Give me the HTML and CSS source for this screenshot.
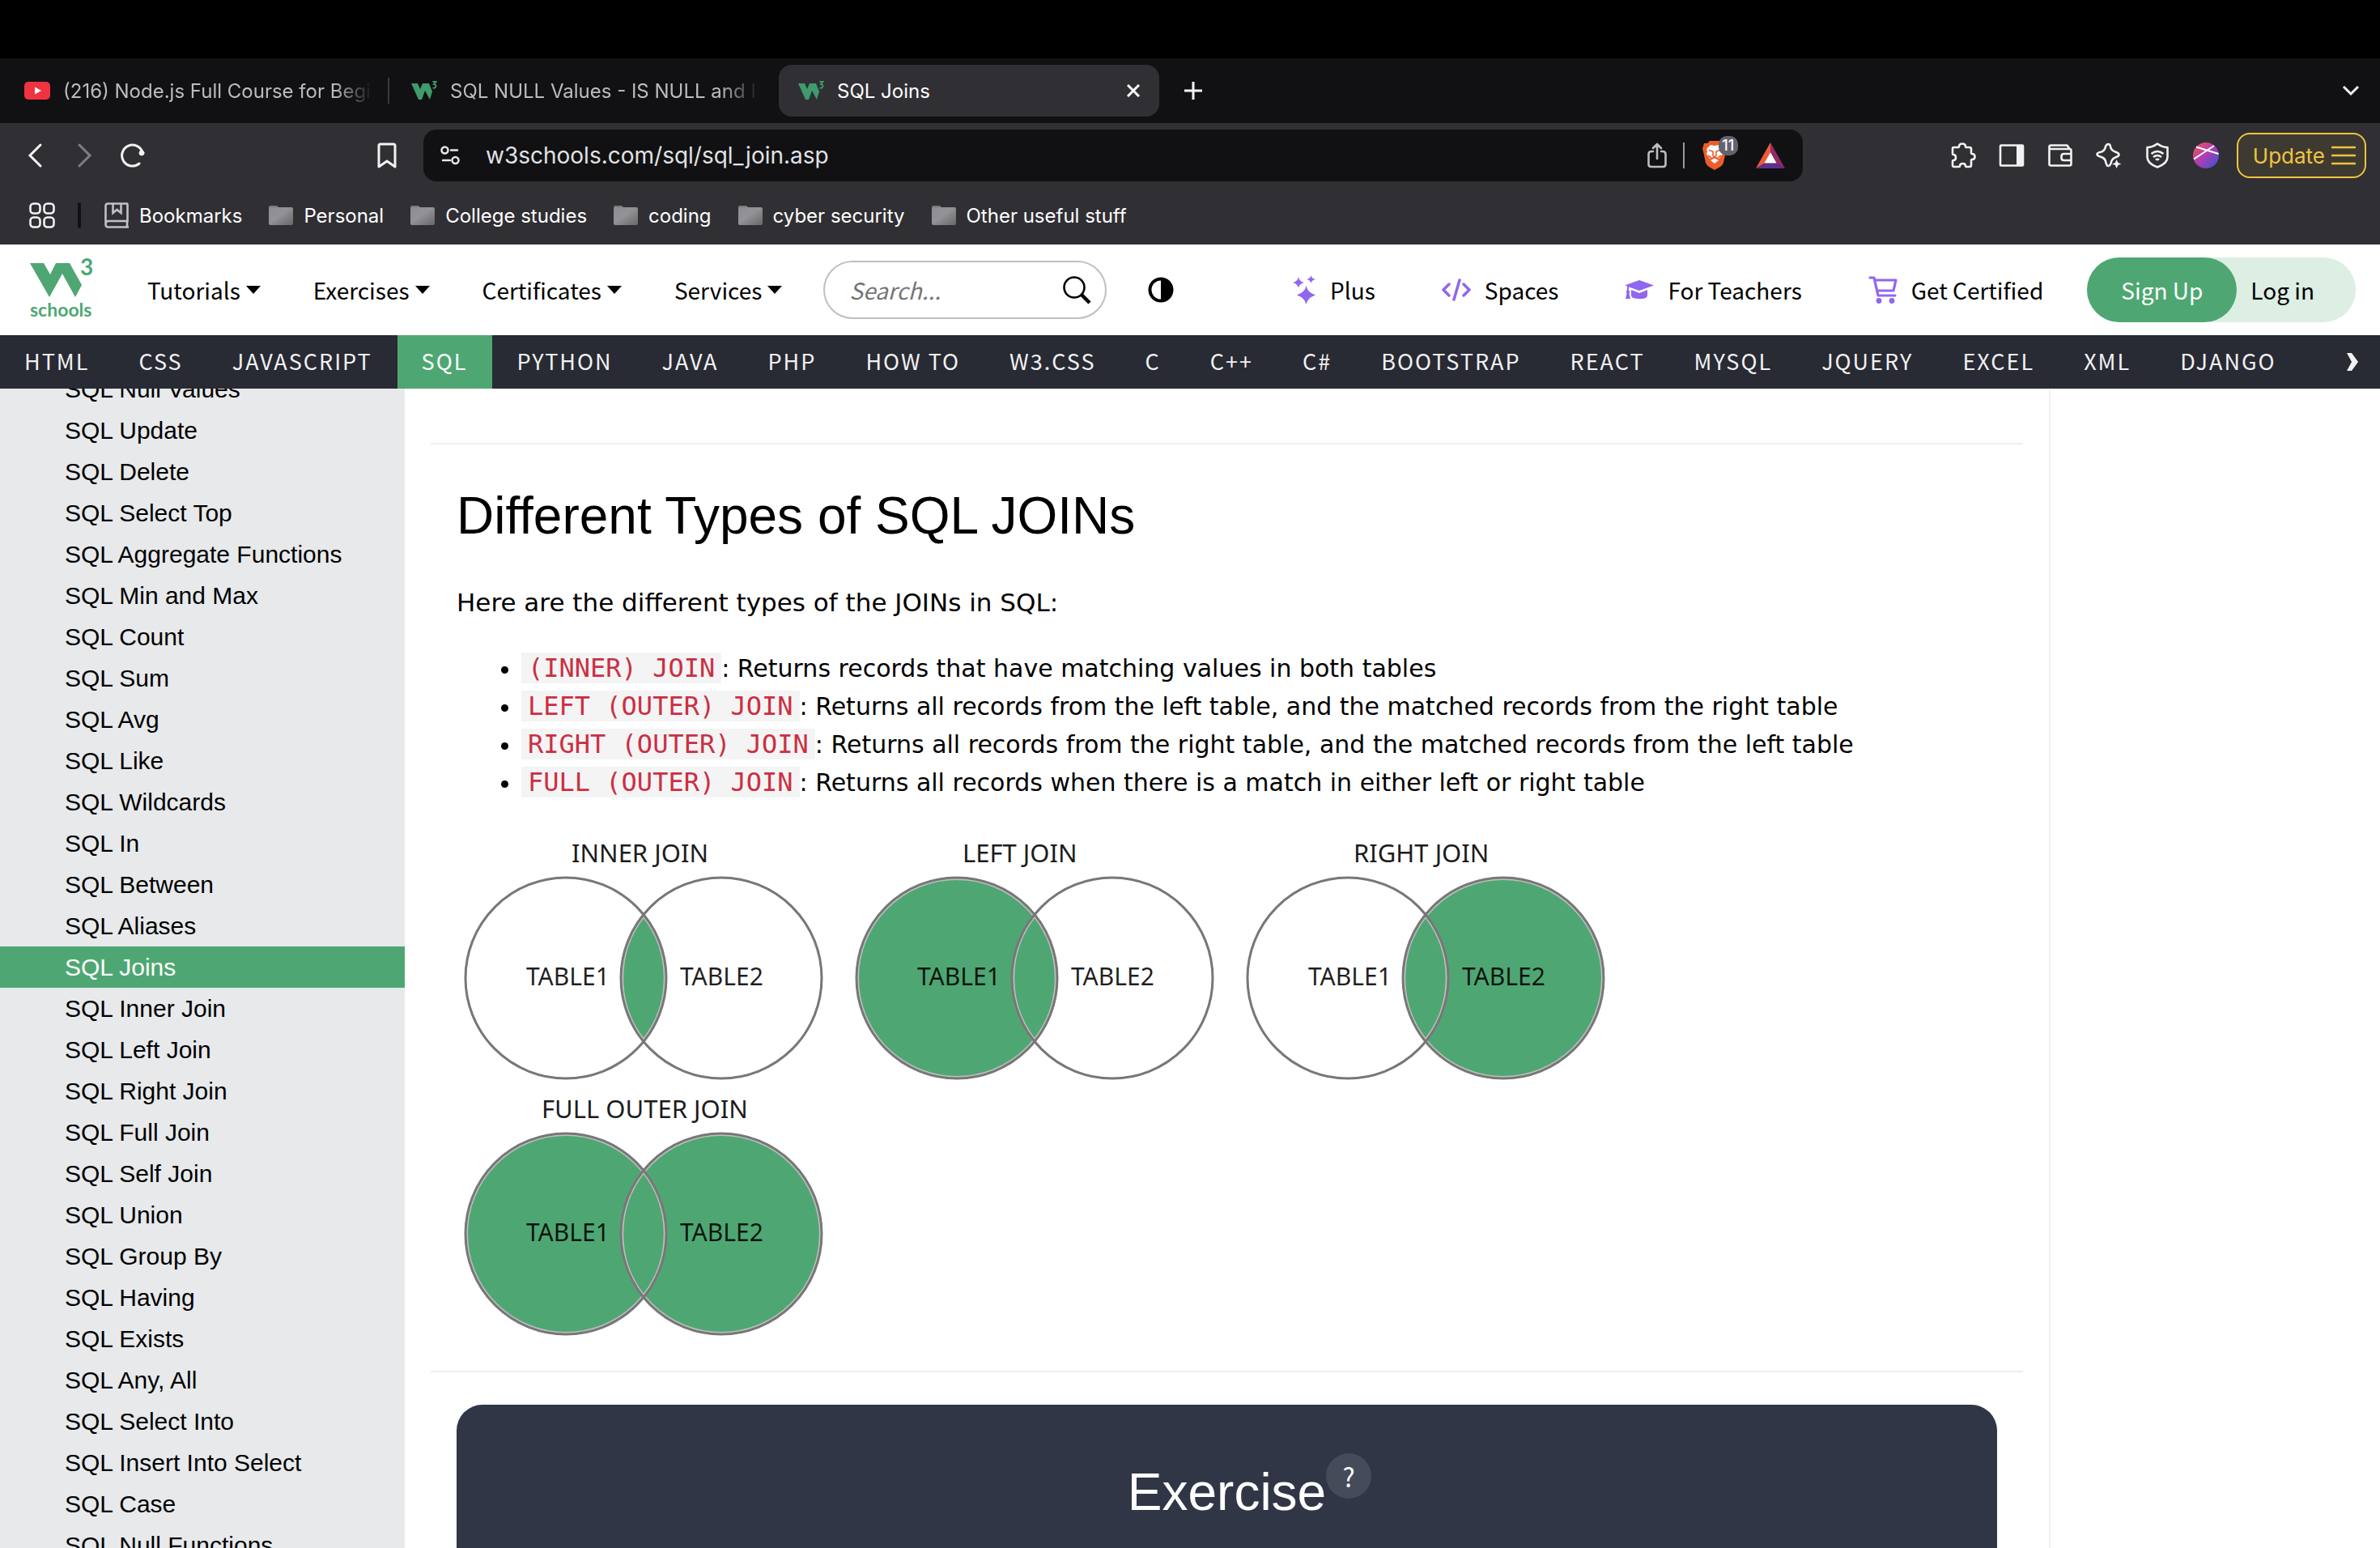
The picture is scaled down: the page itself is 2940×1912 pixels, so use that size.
FILE: index.html
```html
<!DOCTYPE html>
<html lang="en">
<head>
<meta charset="utf-8">
<title>SQL Joins</title>
<link rel="stylesheet" href="styles.css">
</head>
<body>
<svg class="defs" aria-hidden="true">
  <defs>
    <linearGradient id="folder-fill" x1="0" y1="0" x2="1" y2="1"><stop offset="0" stop-color="#8d8d92"/><stop offset=".45" stop-color="#929297"/><stop offset="1" stop-color="#68686a"/></linearGradient>
    <linearGradient id="avatar-fill" x1="0" y1="0" x2="1" y2="1"><stop offset=".1" stop-color="#e4565f"/><stop offset=".45" stop-color="#b63cae"/><stop offset=".9" stop-color="#4a50d0"/></linearGradient>
    <symbol id="folder" viewBox="0 0 30 26"><path d="M0 3a2 2 0 0 1 2-2h8l3 3h-13z" fill="#7b7a78"/><rect y="3" width="30" height="22" rx="2" fill="url(#folder-fill)"/></symbol>
    <symbol id="w3" viewBox="0 0 32 24"><path d="M0 3h8l3 7 3-7h8l4 10-3 10-6-11-4 11h-4z" fill="#3f9a6c"/><path d="M26.500 1h4l-2.500 3c4 0 3 6-1.500 4.500" fill="none" stroke="#3f9a6c" stroke-width="1.800"/></symbol>
    <symbol id="caret" viewBox="0 0 18 10"><path d="M0 0h18l-9 10z"/></symbol>
  </defs>
</svg>

<header class="browser">
  <div class="menubar"></div>
  <div class="tabs">
    <button class="tab" type="button">
      <svg width="32" height="32" viewBox="0 0 32 32"><rect y="5" width="32" height="22" rx="5" fill="#ef3340"/><path d="M13 11.500l8 4.500-8 4.500z" fill="#fff"/></svg>
      <span class="tab-title">(216) Node.js Full Course for Beginners</span>
    </button>
    <span class="tab-divider"></span>
    <button class="tab" type="button">
      <svg width="32" height="24"><use href="#w3"/></svg>
      <span class="tab-title">SQL NULL Values - IS NULL and IS NOT</span>
    </button>
    <span class="tab-space"></span>
    <button class="tab tab-active" type="button">
      <svg width="32" height="24"><use href="#w3"/></svg>
      <span class="tab-title">SQL Joins</span>
      <svg width="16" height="16" viewBox="0 0 16 16" fill="none" stroke="#fff" stroke-width="3"><path d="M1 1l14 14M15 1l-14 14"/></svg>
    </button>
    <button class="icon-button new-tab" type="button" aria-label="New tab"><svg width="22" height="22" viewBox="0 0 22 22" fill="none" stroke="#f5f5f5" stroke-width="3"><path d="M11 0v22M0 11h22"/></svg></button>
    <button class="icon-button tab-list" type="button" aria-label="Search tabs"><svg width="22" height="14" viewBox="0 0 22 14" fill="none" stroke="#f5f5f5" stroke-width="3"><path d="M2 2l9 9 9-9"/></svg></button>
  </div>

  <div class="toolbar">
    <div class="history">
      <button class="icon-button" type="button" aria-label="Back"><svg width="32" height="32" viewBox="0 0 32 32" fill="none" stroke="#f2f2f4" stroke-width="3" stroke-linecap="round"><path d="M22 3L9 16l13 13"/></svg></button>
      <button class="icon-button" type="button" aria-label="Forward"><svg width="32" height="32" viewBox="0 0 32 32" fill="none" stroke="#7d7d82" stroke-width="3" stroke-linecap="round"><path d="M10 3l13 13-13 13"/></svg></button>
      <button class="icon-button" type="button" aria-label="Reload"><svg width="32" height="32" viewBox="0 0 32 32" fill="none" stroke="#f2f2f4" stroke-width="3" stroke-linecap="round"><path d="M24 26A13 13 0 1 1 28 12"/><circle cx="27" cy="13" r="3" fill="#f2f2f4" stroke-width="1"/></svg></button>
      <button class="icon-button add-bookmark" type="button" aria-label="Add bookmark"><svg width="24" height="32" viewBox="0 0 24 32" fill="none" stroke="#f2f2f4" stroke-width="3" stroke-linejoin="round"><path d="M2 4q0-2 2-2h16q2 0 2 2v26l-10-7-10 7z"/></svg></button>
    </div>
    <div class="address">
      <svg width="24" height="24" viewBox="0 0 24 24" fill="none" stroke="#e6e6e8" stroke-width="2.500" stroke-linecap="round"><circle cx="5.500" cy="5.500" r="4"/><path d="M13 5.500h8M3 18h9"/><circle cx="18.500" cy="18" r="4"/></svg>
      <input class="address-text" type="text" aria-label="Address" value="w3schools.com/sql/sql_join.asp">
      <svg width="24" height="32" viewBox="0 0 24 32" fill="none" stroke="#bdbdc0" stroke-width="2.600" stroke-linecap="round" stroke-linejoin="round"><path d="M12 20V2M7 7l5-5 5 5M7 11H5q-3.500 0-3.500 3.500V27q0 3 3.500 3h14q3.500 0 3.500-3V14.500Q22.500 11 19 11h-2"/></svg>
      <span class="address-divider"></span>
      <span class="shield">
        <svg width="30" height="36" viewBox="0 0 30 36"><path d="M9 0h12l3 3h3l3 7-1 3-3 14q-1 3-4 5l-7 4-7-4q-3-2-4-5L1 13 0 10l2-7h4z" fill="#ec5d2a"/><path d="M10 5l5 1 5-1 5 5-1 3 1 3-4 6-6-3-6 3-4-6 1-3-1-3zM10 24l5-2.500 5 2.500-5 4z" fill="#fff"/><path d="M8 11.500l5 1.500v5l2 2 2-2v-5l5-1.500M7 18l4 3M23 18l-4 3" fill="none" stroke="#ec5d2a" stroke-width="1.600"/></svg>
        <span class="badge">11</span>
      </span>
      <svg width="36" height="32" viewBox="0 0 36 32"><path d="M18 0L0 32l11-6.500L18 12z" fill="#f15a38"/><path d="M18 0l18 32-11-6.500L18 12z" fill="#932c64"/><path d="M0 32h36l-11-6.500H11z" fill="#5f2f8e"/><path d="M18 12l7.500 13.500h-15z" fill="#fff"/></svg>
    </div>
    <div class="extensions">
      <button class="icon-button" type="button" aria-label="Extensions"><svg width="32" height="32" viewBox="0 0 32 32" fill="none" stroke="#f2f2f4" stroke-width="2.600" stroke-linejoin="round"><path d="M4 6h6q1 0 1-1 0-3.500 4-3.500T19 5q0 1 1 1h4q2 0 2 2v5q0 1 1 1 3.500 0 3.500 3.500T27 21q-1 0-1 1v6q0 2-2 2h-4q-1 0-1-1 0-3-3.500-3T12 29q0 1-1 1H5q-2 0-2-2v-5q0-1 1-1 3 0 3-3.500T4 15q-1 0-1-1V8q0-2 1-2z"/></svg></button>
      <button class="icon-button" type="button" aria-label="Sidebar"><svg width="32" height="32" viewBox="0 0 32 32"><rect x="2" y="3.500" width="28" height="25" rx="1" fill="none" stroke="#f2f2f4" stroke-width="2.600"/><path d="M22 3h8v26h-8z" fill="#f2f2f4"/></svg></button>
      <button class="icon-button" type="button" aria-label="Wallet"><svg width="32" height="32" viewBox="0 0 32 32" fill="none" stroke="#f2f2f4" stroke-width="2.600" stroke-linejoin="round"><path d="M2.500 8V5.500q0-2 2-2h20l3 4.500H2.500v18.500q0 2 2 2h23q2 0 2-2V10q0-2-2-2M29.500 14h-9q-3 0-3 3v2q0 3 3 3h9"/></svg></button>
      <button class="icon-button" type="button" aria-label="Assistant"><svg width="32" height="32" viewBox="0 0 32 32" fill="none" stroke="#f2f2f4" stroke-width="2.600" stroke-linejoin="round"><path d="M15.500 2q2 0 2.500 3 1 5 6 6.500 4.500 1.500 4.500 3.500T24 18.500q-3 1-4.500 4Q18 29 15.500 29T12 23q-1-3.500-5-5-5.500-1.500-5.500-3.500T7 11.500q4-1.500 5-6.500 1-3 3.500-3z"/><path d="M25.500 21l2 4 4 1.500-4 1.500-2 4-1.500-4-4-1.500 4-1.500z" fill="#f2f2f4" stroke="none"/></svg></button>
      <button class="icon-button" type="button" aria-label="VPN"><svg width="32" height="32" viewBox="0 0 32 32" fill="none" stroke="#f2f2f4" stroke-width="2.600" stroke-linejoin="round"><path d="M16 1.500q6 4.500 12.500 4.500v12q0 8-12.500 12.500Q3.500 26 3.500 18V6Q10 6 16 1.500z"/><path d="M8.500 14q7.500-6 15 0M11 18q5-4 10 0M14 21.500q2-1.500 4 0"/></svg></button>
      <button class="icon-button" type="button" aria-label="Profile"><svg width="32" height="32" viewBox="0 0 32 32"><circle cx="16" cy="16" r="16" fill="url(#avatar-fill)"/><path d="M4 5.500L31.500 14M1 20.500L26 4" stroke="#fff" stroke-width="2"/></svg></button>
      <button class="update" type="button">Update<svg width="30" height="24" viewBox="0 0 30 24" stroke="#efc440" stroke-width="2.600" stroke-linecap="round"><path d="M1 2h28M1 12h28M1 22h28"/></svg></button>
    </div>
  </div>

  <nav class="bookmarks" aria-label="Bookmarks">
    <button class="icon-button" type="button" aria-label="Apps"><svg width="32" height="32" viewBox="0 0 32 32" fill="none" stroke="#f2f2f4" stroke-width="2.600"><rect x="1.500" y="1.500" width="12" height="12" rx="4"/><rect x="18.500" y="1.500" width="12" height="12" rx="4"/><rect x="1.500" y="18.500" width="12" height="12" rx="4"/><rect x="18.500" y="18.500" width="12" height="12" rx="4"/></svg></button>
    <span class="bookmarks-divider"></span>
    <a href="#"><svg width="30" height="32" viewBox="0 0 30 32" fill="none" stroke="#bfc0c6" stroke-width="2.600"><path d="M29 1.500H4.500q-3 0-3 3V27q0 3.500 3 3.500H30M28.500 1.500v21.500H5q-3.500 0-3.500 4M28 23v7M10.500 2v11l5-4 5 4V2"/></svg>Bookmarks</a>
    <a href="#"><svg width="30" height="26"><use href="#folder"/></svg>Personal</a>
    <a href="#"><svg width="30" height="26"><use href="#folder"/></svg>College studies</a>
    <a href="#"><svg width="30" height="26"><use href="#folder"/></svg>coding</a>
    <a href="#"><svg width="30" height="26"><use href="#folder"/></svg>cyber security</a>
    <a href="#"><svg width="30" height="26"><use href="#folder"/></svg>Other useful stuff</a>
  </nav>
</header>

<header class="site">
  <a class="logo" href="#" aria-label="W3Schools">
    <span class="logo-mark"><svg width="66" height="44" viewBox="0 0 66 44"><path d="M0 1h17l8 14 7-14h17l15 27-8 15-16-29-16 29z" fill="#4ea773"/></svg><span class="logo-three">3</span></span>
    <span class="logo-word">schools</span>
  </a>
  <nav class="site-menu" aria-label="Site">
    <a href="#">Tutorials<svg width="18" height="10"><use href="#caret"/></svg></a>
    <a href="#">Exercises<svg width="18" height="10"><use href="#caret"/></svg></a>
    <a href="#">Certificates<svg width="18" height="10"><use href="#caret"/></svg></a>
    <a href="#">Services<svg width="18" height="10"><use href="#caret"/></svg></a>
  </nav>
  <form class="search">
    <input type="text" placeholder="Search..." aria-label="Search">
    <button class="icon-button" type="button" aria-label="Submit search"><svg width="36" height="36" viewBox="0 0 36 36" fill="none" stroke="#000"><circle cx="15" cy="15" r="12.500" stroke-width="2.600"/><path d="M24 24l10 10" stroke-width="4.500"/></svg></button>
  </form>
  <button class="icon-button contrast" type="button" aria-label="Toggle dark mode"><svg width="32" height="32" viewBox="0 0 32 32"><circle cx="16" cy="16" r="13.500" fill="none" stroke="#000" stroke-width="4"/><path d="M16 3a13 13 0 0 1 0 26z"/></svg></button>
  <nav class="site-links" aria-label="Products">
    <a href="#"><svg width="30" height="36" viewBox="0 0 30 36" fill="#9166f0"><path d="M17.500 13q1.500 8 11.500 11.500-10 3.500-11.500 11.500Q16 28 6 24.500 16 21 17.500 13zM8 2q1 5.500 7 7-6 1.500-7 7-1-5.500-7-7 6-1.500 7-7zM23.500 0q.5 4 5.500 5-5 1-5.500 5-.5-4-5.500-5 5-1 5.500-5z"/></svg>Plus</a>
    <a href="#"><svg width="36" height="28" viewBox="0 0 36 28" fill="none" stroke="#9166f0" stroke-width="3.500" stroke-linecap="round" stroke-linejoin="round"><path d="M9 7l-7 7 7 7M27 7l7 7-7 7M22 2l-7 24"/></svg>Spaces</a>
    <a href="#"><svg width="36" height="24" viewBox="0 0 36 24" fill="#9166f0"><path d="M18 0l18 6.500L18 13 5 8.500v4q2 1.500.5 4l1.500 6.500H1l1.500-6.500q-1.500-2.500.5-4V7.500L0 6.500zM8 12l10 4 10-4v7q0 4-10 4T8 19z"/></svg>For Teachers</a>
    <a href="#"><svg width="36" height="34" viewBox="0 0 36 34" fill="none" stroke="#9166f0" stroke-width="3.200" stroke-linejoin="round" stroke-linecap="round"><path d="M2 2h5l5 22h21M8.500 5H34l-3 13H11"/><circle cx="13" cy="30.500" r="1.800" fill="#9166f0"/><circle cx="29" cy="30.500" r="1.800" fill="#9166f0"/></svg>Get Certified</a>
  </nav>
  <div class="account"><a class="sign-up" href="#">Sign Up</a><a class="log-in" href="#">Log in</a></div>
</header>

<nav class="topics" aria-label="Topics">
  <a href="#">HTML</a><a href="#">CSS</a><a href="#">JAVASCRIPT</a><a class="current" href="#">SQL</a><a href="#">PYTHON</a><a href="#">JAVA</a><a href="#">PHP</a><a href="#">HOW TO</a><a href="#">W3.CSS</a><a href="#">C</a><a href="#">C++</a><a href="#">C#</a><a href="#">BOOTSTRAP</a><a href="#">REACT</a><a href="#">MYSQL</a><a href="#">JQUERY</a><a href="#">EXCEL</a><a href="#">XML</a><a href="#">DJANGO</a>
  <button class="icon-button topics-next" type="button" aria-label="More topics"><svg width="16" height="22" viewBox="0 0 16 22" fill="#f1f1f1"><path d="M1 0h6l8 11-8 11H1l6-11z"/></svg></button>
</nav>

<div class="page">
  <nav class="sidebar" aria-label="SQL tutorial">
    <div class="sidebar-list">
      <a href="#">SQL Null Values</a>
      <a href="#">SQL Update</a>
      <a href="#">SQL Delete</a>
      <a href="#">SQL Select Top</a>
      <a href="#">SQL Aggregate Functions</a>
      <a href="#">SQL Min and Max</a>
      <a href="#">SQL Count</a>
      <a href="#">SQL Sum</a>
      <a href="#">SQL Avg</a>
      <a href="#">SQL Like</a>
      <a href="#">SQL Wildcards</a>
      <a href="#">SQL In</a>
      <a href="#">SQL Between</a>
      <a href="#">SQL Aliases</a>
      <a class="current" href="#">SQL Joins</a>
      <a href="#">SQL Inner Join</a>
      <a href="#">SQL Left Join</a>
      <a href="#">SQL Right Join</a>
      <a href="#">SQL Full Join</a>
      <a href="#">SQL Self Join</a>
      <a href="#">SQL Union</a>
      <a href="#">SQL Group By</a>
      <a href="#">SQL Having</a>
      <a href="#">SQL Exists</a>
      <a href="#">SQL Any, All</a>
      <a href="#">SQL Select Into</a>
      <a href="#">SQL Insert Into Select</a>
      <a href="#">SQL Case</a>
      <a href="#">SQL Null Functions</a>
    </div>
  </nav>

  <main class="content">
    <hr>
    <section class="types">
      <h2>Different Types of SQL JOINs</h2>
      <p>Here are the different types of the JOINs in SQL:</p>
      <ul>
        <li><code>(INNER) JOIN</code>: Returns records that have matching values in both tables</li>
        <li><code>LEFT (OUTER) JOIN</code>: Returns all records from the left table, and the matched records from the right table</li>
        <li><code>RIGHT (OUTER) JOIN</code>: Returns all records from the right table, and the matched records from the left table</li>
        <li><code>FULL (OUTER) JOIN</code>: Returns all records when there is a match in either left or right table</li>
      </ul>
      <div class="diagrams">
        <svg class="venn" viewBox="0 0 483 316">
          <path class="area" d="M231 105A124 124 0 0 1 231 259A124 124 0 0 1 231 105z"/>
          <circle class="ring" cx="135" cy="182" r="124"/><circle class="ring" cx="327" cy="182" r="124"/>
          <text class="caption" x="142" y="39">INNER JOIN</text><text class="label" x="86" y="191">TABLE1</text><text class="label" x="276" y="191">TABLE2</text>
        </svg>
        <svg class="venn" viewBox="0 0 483 316">
          <circle class="area" cx="135" cy="182" r="123"/>
          <path class="area" d="M231 105A124 124 0 0 1 231 259A124 124 0 0 1 231 105z"/>
          <circle class="ring" cx="135" cy="182" r="124"/><circle class="ring" cx="327" cy="182" r="124"/>
          <text class="caption" x="142" y="39">LEFT JOIN</text><text class="label" x="86" y="191">TABLE1</text><text class="label" x="276" y="191">TABLE2</text>
        </svg>
        <svg class="venn" viewBox="0 0 483 316">
          <circle class="area" cx="327" cy="182" r="123"/>
          <path class="area" d="M231 105A124 124 0 0 1 231 259A124 124 0 0 1 231 105z"/>
          <circle class="ring" cx="135" cy="182" r="124"/><circle class="ring" cx="327" cy="182" r="124"/>
          <text class="caption" x="142" y="39">RIGHT JOIN</text><text class="label" x="86" y="191">TABLE1</text><text class="label" x="276" y="191">TABLE2</text>
        </svg>
        <svg class="venn" viewBox="0 0 483 316">
          <circle class="area" cx="135" cy="182" r="123"/><circle class="area" cx="327" cy="182" r="123"/>
          <path class="area" d="M231 105A124 124 0 0 1 231 259A124 124 0 0 1 231 105z"/>
          <circle class="ring" cx="135" cy="182" r="124"/><circle class="ring" cx="327" cy="182" r="124"/>
          <text class="caption" x="105" y="39">FULL OUTER JOIN</text><text class="label" x="86" y="191">TABLE1</text><text class="label" x="276" y="191">TABLE2</text>
        </svg>
      </div>
    </section>
    <hr>
    <section class="exercise">
      <h2>Exercise</h2><button class="help" type="button" aria-label="What is this?">?</button>
    </section>
  </main>
</div>
</body>
</html>
```
FILE: styles.css
```css
* { box-sizing: border-box; }

body {
  margin: 0;
  height: 100vh;
  overflow: hidden;
  display: flex;
  flex-direction: column;
  background: #fff;
  color: #000;
  font-family: "DejaVu Sans", sans-serif;
  font-size: 30px;
}

a { color: inherit; text-decoration: none; }
svg { flex: none; display: block; }
button, input { font: inherit; color: inherit; border: 0; padding: 0; background: none; }
.defs { position: absolute; width: 0; height: 0; }
.icon-button { display: flex; flex: none; }

/* Browser window */
.browser {
  flex: none;
  background: #302f34;
  color: #fff;
  font-family: Inter, sans-serif;
  font-size: 24px;
}
.menubar { height: 72px; background: #000; }

.tabs {
  display: flex;
  align-items: center;
  height: 80px;
  padding: 0 25px 0 6px;
  background: #111113;
}
.tab {
  display: flex;
  align-items: center;
  gap: 16px;
  width: 470px;
  height: 64px;
  padding: 0 24px;
  border-radius: 16px;
  color: #bcbcbe;
  text-align: left;
}
.tab:not(.tab-active) { padding-right: 16px; }
.tab-title { flex: 1; overflow: hidden; white-space: nowrap; }
.tab:not(.tab-active) .tab-title {
  mask-image: linear-gradient(90deg, #000 calc(100% - 48px), transparent);
}
.tab-active { background: #302f34; color: #fff; }
.tab-divider { width: 2px; height: 32px; margin: 0 3px; background: #3a3a3e; }
.tab-space { width: 8px; }
.new-tab { margin-left: 31px; }
.tab-list { margin-left: auto; }

.toolbar { display: flex; align-items: center; height: 80px; padding-right: 17px; }
.history {
  display: flex;
  align-items: center;
  gap: 28px;
  width: 523px;
  padding: 0 33px 0 28px;
}
.add-bookmark { margin-left: auto; }
.address {
  display: flex;
  align-items: center;
  flex: 1;
  height: 64px;
  padding: 0 22px 0 21px;
  border-radius: 16px;
  background: #111113;
}
.address-text {
  flex: 1;
  min-width: 0;
  margin-left: 32px;
  font-size: 28px;
  color: #e2e2e4;
}
.address-divider { width: 2px; height: 32px; margin: 0 22px 0 20px; background: #9a9a9e; }
.shield { position: relative; margin-right: 36px; }
.badge {
  position: absolute;
  left: 20px;
  top: -6px;
  width: 24px;
  height: 24px;
  border-radius: 10px;
  background: #63636f;
  font-size: 18px;
  font-weight: 500;
  line-height: 24px;
  text-align: center;
}
.extensions { display: flex; align-items: center; gap: 28px; margin-left: 182px; }
.update {
  display: flex;
  align-items: center;
  gap: 8px;
  height: 56px;
  margin-left: -6px;
  padding: 0 11px 0 18px;
  border: 2px solid #efc440;
  border-radius: 16px;
  background: #3f3a31;
  color: #efc440;
  font-size: 26px;
}

.bookmarks { display: flex; align-items: center; height: 70px; padding: 0 36px 2px; }
.bookmarks a { display: flex; align-items: center; gap: 13px; margin-right: 33px; }
.bookmarks-divider { width: 4px; height: 32px; margin: 0 29px 0 28px; border-radius: 2px; background: #111113; }

/* Site header */
.site {
  display: flex;
  flex: none;
  align-items: center;
  height: 112px;
  padding: 0 30px 0 37px;
  font-family: "Noto Sans CJK SC", sans-serif;
  font-size: 28px;
  line-height: 40px;
}
.logo { display: flex; flex-direction: column; width: 145px; color: #4ea773; font-family: Lato, sans-serif; }
.logo-mark { position: relative; padding-top: 4px; }
.logo-three { position: absolute; left: 62px; top: -11px; font-size: 28px; font-weight: 700; }
.logo-word { font-size: 23px; font-weight: 700; line-height: 28px; }
.site-menu { display: flex; gap: 65px; }
.site-menu a { display: flex; align-items: center; gap: 7px; }
.search {
  display: flex;
  align-items: center;
  width: 350px;
  height: 72px;
  margin-left: 51px;
  padding: 0 17px 0 30px;
  border: 2px solid #bfbfbf;
  border-radius: 36px;
}
.search input { flex: 1; min-width: 0; font-style: italic; }
.search input::placeholder { color: #757575; }
.contrast { margin-left: 51px; }
.site-links { display: flex; gap: 82px; margin-left: auto; }
.site-links a { display: flex; align-items: center; gap: 17px; }
.account {
  display: flex;
  height: 80px;
  margin-left: 54px;
  border-radius: 40px;
  background: #ddeee3;
  line-height: 80px;
}
.sign-up { padding: 0 42px; border-radius: 40px; background: #4ea773; color: #fff; }
.log-in { padding: 0 51px 0 17px; }

.topics {
  display: flex;
  flex: none;
  height: 66px;
  background: #282a34;
  color: #f1f1f1;
  font-family: "Noto Sans CJK SC", sans-serif;
  font-size: 27px;
  line-height: 64px;
  letter-spacing: 2px;
  white-space: nowrap;
}
.topics a { padding: 0 31px 0 30px; }
.topics .current { background: #4ea773; color: #fff; }
.topics-next { align-self: center; margin-left: auto; margin-right: 26px; }

/* Tutorial page */
.page { display: flex; flex: 1; min-height: 0; overflow: hidden; }
.sidebar { width: 500px; flex: none; overflow: hidden; background: #e7e9eb; }
.sidebar-list {
  display: flex;
  flex-direction: column;
  margin-top: -25px;
  font-family: "Liberation Sans", sans-serif;
  line-height: 51px;
}
.sidebar a { padding-left: 80px; }
.sidebar .current { background: #4ea773; color: #fff; }

.content {
  display: flex;
  flex: 1;
  flex-direction: column;
  margin-right: 407px;
  padding: 67px 32px 0;
  border-right: 2px solid #f1f1f1;
}
hr { flex: none; width: 100%; height: 2px; margin: 0; border: 0; background: #eee; }
h2 {
  margin: 0;
  font-family: "Liberation Sans", sans-serif;
  font-size: 64px;
  font-weight: 400;
  line-height: 96px;
}
.types { padding: 40px 32px 35px; }
.types p { margin: 37px 0 35px; font-size: 31px; line-height: 45px; }
.types ul { margin: 0; padding-left: 80px; line-height: 47px; }
code {
  padding: 0 8px;
  background: #f4f4f4;
  color: #cb2f43;
  font-family: "DejaVu Sans Mono", monospace;
  font-size: 32px;
  line-height: 32px;
}
.diagrams { display: flex; flex-wrap: wrap; margin-top: 36px; }
.venn { width: 483px; height: 316px; font-family: "Noto Sans", sans-serif; }
.area { fill: #4ea773; stroke: #c2bfc0; stroke-width: 4px; }
.ring { fill: none; stroke: #777; stroke-width: 3px; }
.caption { fill: #1c1c1c; font-size: 31px; }
.label { fill: #000; fill-opacity: .88; font-size: 30px; }

.exercise {
  display: flex;
  flex: 1;
  justify-content: center;
  margin: 40px 32px 0;
  padding-top: 60px;
  border-radius: 32px 32px 0 0;
  background: #303646;
  color: #fff;
}
.help {
  width: 56px;
  height: 56px;
  margin-right: -56px;
  border-radius: 28px;
  background: #464b5a;
  font-family: "Noto Sans CJK SC", sans-serif;
  font-size: 32px;
  line-height: 56px;
}
```
